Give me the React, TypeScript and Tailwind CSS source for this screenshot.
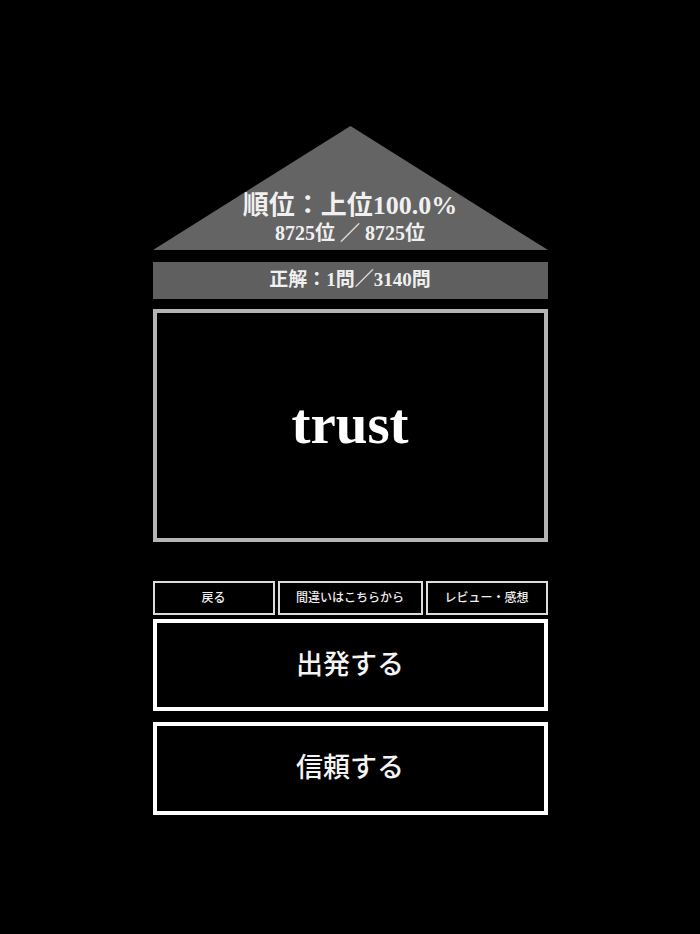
const font = { fontFamily: '"Liberation Serif", "Noto Sans CJK JP", serif' };

function Triangle() {
  return (
    <div className="relative w-[395px] h-[124px] flex flex-col items-center justify-end pb-[4px] text-[#f0f0f0] font-bold">
      <svg
        className="absolute inset-0"
        width="395"
        height="124"
        viewBox="0 0 395 124"
        preserveAspectRatio="none"
      >
        <polygon points="197.5,0 395,124 0,124" fill="#646464" />
      </svg>
      <p className="relative text-[26px] leading-[30px] whitespace-nowrap">順位：上位100.0%</p>
      <p className="relative text-[20px] leading-[25px] whitespace-nowrap">8725位 ／ 8725位</p>
    </div>
  );
}

function SmallButton({ label, w }: { label: string; w: string }) {
  return (
    <button
      className={`${w} h-[34px] border-2 border-[#dcdcdc] bg-black text-[12px] font-medium text-[#eeeeee] flex items-center justify-center`}
    >
      {label}
    </button>
  );
}

function BigButton({ label, h }: { label: string; h: string }) {
  return (
    <button
      className={`w-full ${h} border-4 border-white bg-black text-[27px] font-medium text-[#f4f4f4] flex items-center justify-center`}
    >
      {label}
    </button>
  );
}

export default function App() {
  return (
    <div className="min-h-[934px] w-full bg-black flex flex-col items-center pt-[126px]" style={font}>
      <div className="w-[395px] flex flex-col">
        <Triangle />
        <div className="mt-[12px] h-[37px] bg-[#5f5f5f] flex items-center justify-center text-[19px] font-bold text-[#f0f0f0]">
          正解：1問／3140問
        </div>
        <div className="mt-[10px] h-[233px] border-4 border-[#b4b4b4] flex items-center justify-center">
          <span className="text-[57px] font-bold text-white leading-none pb-[4px]">trust</span>
        </div>
        <div className="mt-[39px] flex gap-[3px]">
          <SmallButton label="戻る" w="w-[122px]" />
          <SmallButton label="間違いはこちらから" w="w-[145px]" />
          <SmallButton label="レビュー・感想" w="w-[122px]" />
        </div>
        <div className="mt-[4px] flex flex-col gap-[11px]">
          <BigButton label="出発する" h="h-[92px]" />
          <BigButton label="信頼する" h="h-[93px]" />
        </div>
      </div>
    </div>
  );
}
